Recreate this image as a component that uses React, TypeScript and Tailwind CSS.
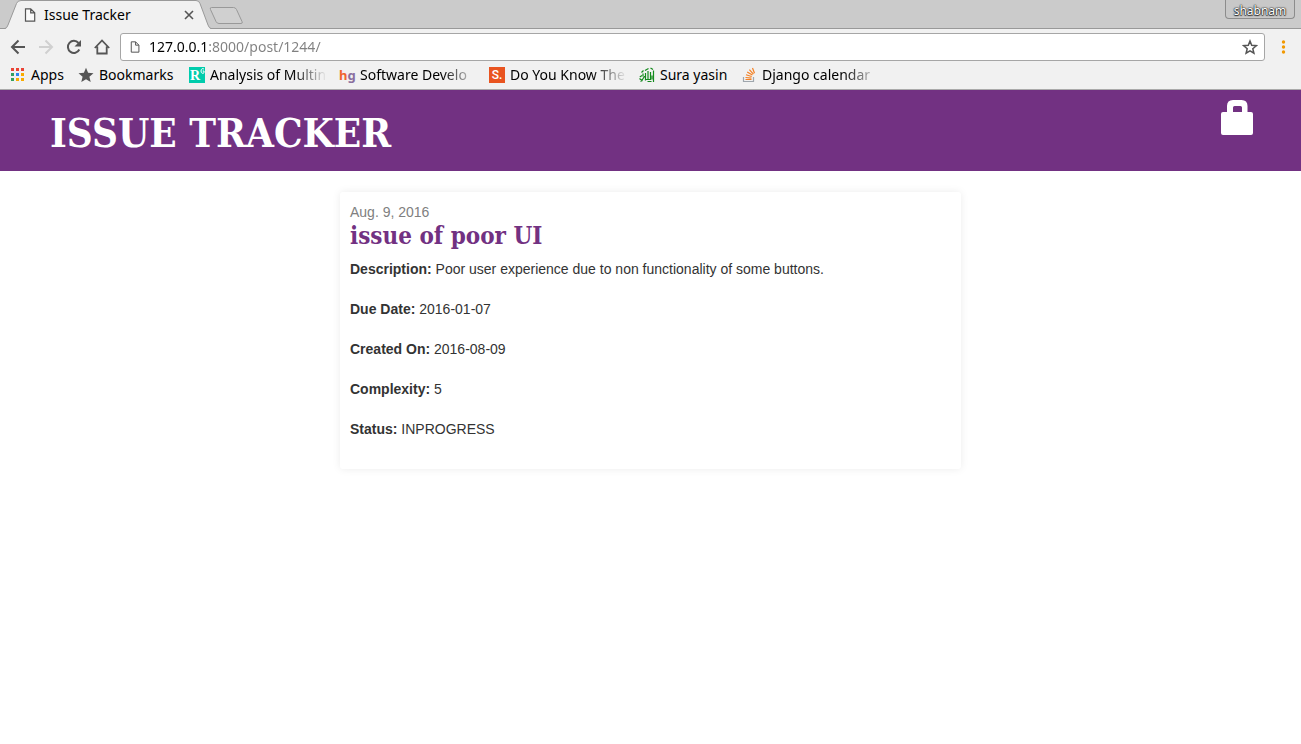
import type { ReactNode } from "react";

const details = [
  { label: "Description:", value: "Poor user experience due to non functionality of some buttons." },
  { label: "Due Date:", value: "2016-01-07" },
  { label: "Created On:", value: "2016-08-09" },
  { label: "Complexity:", value: "5" },
  { label: "Status:", value: "INPROGRESS" },
];

function PageIcon({ className }: { className: string }) {
  return (
    <svg viewBox="0 0 12 14" className={className} fill="#fafafa" stroke="#555" strokeWidth="1.2" aria-hidden="true">
      <path d="M1.5.8h5.2l4 4v8.400H1.500zM6.700.8v4h4" />
    </svg>
  );
}

function AppsIcon() {
  const colours = ["#ea4335", "#ea4335", "#ea4335", "#34a060", "#2f86f0", "#f9ab00", "#34a060", "#f9ab00", "#f9ab00"];
  return (
    <svg viewBox="0 0 16 16" className="size-4" aria-hidden="true">
      {colours.map((fill, i) => (
        <rect key={i} x={1 + (i % 3) * 5} y={1 + Math.floor(i / 3) * 5} width="3" height="3" fill={fill} />
      ))}
    </svg>
  );
}

function StarIcon() {
  return (
    <svg viewBox="0 0 16 16" className="size-4" fill="#555" aria-hidden="true">
      <path d="m8 .8 2.100 5 5.400.5-4.100 3.500 1.300 5.300L8 12.300l-4.700 2.800 1.300-5.300L.5 6.300l5.400-.5z" />
    </svg>
  );
}

function ResearchIcon() {
  return (
    <span aria-hidden="true" className="relative block size-4 bg-[#00ccac] pl-px font-['Liberation_Serif',serif] text-[14px] font-bold leading-[18px] text-white">
      R
      <svg viewBox="0 0 5 6" className="absolute right-0 top-px h-[6px] w-[5px]" fill="none" stroke="#fff">
        <path d="M4 1.200C3 0 1 .5 1 3s2 2.800 3 1.800V3H2.700" />
      </svg>
    </span>
  );
}

function HgIcon() {
  return (
    <span aria-hidden="true" className="flex size-4 font-['Noto_Sans',sans-serif] text-[13px] font-bold leading-4">
      <span className="text-[#f0652f]">h</span>
      <span className="text-[#8a6f9e]">g</span>
    </span>
  );
}

function SIcon() {
  return (
    <span aria-hidden="true" className="block size-4 bg-[#e95420] text-center font-['Roboto',sans-serif] text-[12px] font-medium leading-4 text-white">
      S.
    </span>
  );
}

function CalligraphyIcon() {
  return (
    <svg viewBox="0 0 16 16" className="size-4" fill="none" stroke="#128a1c" strokeWidth="1.2" aria-hidden="true">
      <path d="M14.500 3.500v11.500M11.500 5v7.500h-2.500M9 4v8.500H6.500M6.500 6v7.500M6.500 9.500C4.500 8.500 4 14 1.500 14.500M.8 10 3 8.500M.5 11.500 3.500 14M2.500 5.500l2-2M6 3.500 9.500 1.500M11.500 1l2.500 1.500M12.500 14.500H8.500M4 6.500v3M13 8.500v4" />
    </svg>
  );
}

function StackIcon() {
  return (
    <svg viewBox="0 0 16 16" className="size-4" fill="none" aria-hidden="true">
      <path d="M2.500 10v4.500h10V10" stroke="#9fa6ad" strokeWidth="1.2" />
      <path d="M4.500 12.500h6M4.500 10.500l6 .6M5 7.800l5.700 1.700M6.200 5l5.200 3M8.400 2.700l4 4.500M11.500 1l2 5.200" stroke="#f48024" strokeWidth="1.200" />
    </svg>
  );
}

const bookmarks: { name: string; icon: ReactNode; width: string; fade?: boolean }[] = [
  { name: "Apps", icon: <AppsIcon />, width: "w-14" },
  { name: "Bookmarks", icon: <StarIcon />, width: "w-[99px]" },
  { name: "Analysis of Multin", icon: <ResearchIcon />, width: "w-[138px]", fade: true },
  { name: "Software Develo", icon: <HgIcon />, width: "w-[138px]", fade: true },
  { name: "Do You Know The", icon: <SIcon />, width: "w-[138px]", fade: true },
  { name: "Sura yasin", icon: <CalligraphyIcon />, width: "w-[90px]" },
  { name: "Django calendar", icon: <StackIcon />, width: "w-[138px]", fade: true },
];

function TabStrip() {
  return (
    <div className="flex h-[29px] items-start border-b border-[#999] bg-[#cbcbcb] pl-[5px]">
      <div className="relative flex h-[29px] w-[206px] shrink-0 items-center pl-[19px] pr-[17px]">
        <svg viewBox="0 0 206 29" className="absolute inset-0 h-full w-full" aria-hidden="true">
          <path d="M0 29Q2 28 3 25L11.500 3.500Q12.500.5 16 .5H191Q194 .5 195 3.500L203 25Q204 28 206 29Z" fill="#f1f1f1" />
          <path d="M0 28.500Q2 28 3 25L11.500 3.500Q12.500.5 16 .5H191Q194 .5 195 3.500L203 25Q204 28 206 28.500" fill="none" stroke="#999" />
        </svg>
        <PageIcon className="relative h-[14px] w-3" />
        <span className="relative ml-2 flex-1 truncate text-[14px] leading-5">Issue Tracker</span>
        <button aria-label="Close tab" className="relative">
          <svg viewBox="0 0 10 10" className="size-[10px]" stroke="#555" strokeWidth="1.600" aria-hidden="true">
            <path d="m1 1 8 8M9 1 1 9" />
          </svg>
        </button>
      </div>
      <button aria-label="New tab" className="mt-[6px]">
        <svg viewBox="0 0 34 18" className="-ml-[2px] h-[18px] w-[34px]" fill="#d0d0d0" stroke="#999" aria-hidden="true">
          <path d="M2.500 1.500h22q2 0 3 2l5.500 12q1 2-1 2H10q-2 0-3-2L1.500 3.500q-1-2 1-2z" />
        </svg>
      </button>
      <button className="ml-auto mr-[6px] h-[19px] w-[70px] rounded-b-[4px] border border-t-0 border-[#8c8c8c] bg-[#c8c8c8] pt-1 text-[12px] leading-[14px] text-white [text-shadow:0_0_1px_#222,0_0_1px_#222,0_0_2px_#333,0_1px_1px_#333]">
        shabnam
      </button>
    </div>
  );
}

function Toolbar() {
  return (
    <div className="flex h-8 items-end px-[10px]">
      <div className="flex h-7 items-center gap-3">
        <button aria-label="Back">
          <svg viewBox="0 0 16 16" className="size-4" fill="none" stroke="#555" strokeWidth="2" aria-hidden="true">
            <path d="M15 8H2.500M8.500 1.500 2 8l6.500 6.500" />
          </svg>
        </button>
        <button aria-label="Forward">
          <svg viewBox="0 0 16 16" className="size-4" fill="none" stroke="#d0d0d0" strokeWidth="2" aria-hidden="true">
            <path d="M1 8h12.500M7.500 1.500 14 8l-6.500 6.500" />
          </svg>
        </button>
        <button aria-label="Reload">
          <svg viewBox="0 0 16 16" className="size-4" aria-hidden="true">
            <path d="M13.300 10.500A6 6 0 1 1 12.500 4" fill="none" stroke="#555" strokeWidth="2" />
            <path d="M15 1v6.500H8.500z" fill="#555" />
          </svg>
        </button>
        <button aria-label="Home">
          <svg viewBox="0 0 16 16" className="size-4" fill="none" stroke="#555" strokeWidth="1.800" aria-hidden="true">
            <path d="M.8 9 8 1.500 15.200 9M3.300 7.500v7h9.400v-7" />
          </svg>
        </button>
      </div>
      <div className="ml-[10px] flex h-7 flex-1 items-center rounded-[3px] border border-[#a6a6a6] bg-white pl-[9px] pr-[6px]">
        <PageIcon className="h-3 w-[10px]" />
        <input
          aria-label="Address"
          defaultValue="127.0.0.1:8000/post/1244/"
          className="ml-[9px] min-w-0 flex-1 bg-[linear-gradient(to_right,#000_58px,#808080_58px)] bg-clip-text text-[14px] leading-5 text-transparent outline-none"
        />
        <button aria-label="Bookmark this page">
          <svg viewBox="0 0 16 16" className="size-4" fill="none" stroke="#555" strokeWidth="1.500" aria-hidden="true">
            <path d="m8 2 1.700 4.300 4.600.4-3.500 3 1.100 4.500L8 11.800l-3.900 2.400 1.100-4.500-3.500-3 4.600-.4z" />
          </svg>
        </button>
      </div>
      <button aria-label="Menu" className="ml-[10px] h-7">
        <svg viewBox="0 0 16 16" className="size-4" fill="#f29900" aria-hidden="true">
          <circle cx="8.500" cy="3" r="1.700" />
          <circle cx="8.500" cy="8" r="1.700" />
          <circle cx="8.500" cy="13" r="1.700" />
        </svg>
      </button>
    </div>
  );
}

function BookmarkBar() {
  return (
    <nav aria-label="Bookmarks" className="flex h-[29px] items-center gap-3 overflow-hidden border-b border-[#aaa] pl-[10px]">
      {bookmarks.map((b) => (
        <a key={b.name} href="#" className={`flex shrink-0 items-center gap-[5px] ${b.width}`}>
          <span className="size-4 shrink-0">{b.icon}</span>
          <span
            className={`min-w-0 flex-1 whitespace-nowrap text-[14px] leading-5 ${
              b.fade ? "[mask-image:linear-gradient(to_right,#000_70%,transparent)]" : ""
            }`}
          >
            {b.name}
          </span>
        </a>
      ))}
    </nav>
  );
}

export default function App() {
  return (
    <div className="min-h-screen bg-white">
      <div className="bg-[#f1f1f1] font-['Noto_Sans',sans-serif] text-black">
        <TabStrip />
        <Toolbar />
        <BookmarkBar />
      </div>
      <header className="flex h-[81px] items-start justify-between bg-[#723182] pl-[50px] pr-12 pt-[10px]">
        <h1 className="pt-2 font-['DejaVu_Serif_Condensed','DejaVu_Serif',serif] text-[40px] font-bold leading-[50px] text-white">
          <a href="#">ISSUE TRACKER</a>
        </h1>
        <a href="#" aria-label="Log in">
          <svg viewBox="0 0 32 35" className="h-[35px] w-8" fill="#fff" aria-hidden="true">
            <path fillRule="evenodd" d="M6 12V6q0-6 6-6h8.500q6 0 6 6v6H30q2 0 2 2v19q0 2-2 2H2q-2 0-2-2V14q0-2 2-2zM12 12h9V7.500q0-1.500-1.500-1.500h-6Q12 6 12 7.500z" />
          </svg>
        </a>
      </header>
      <main className="px-4 pt-[21px]">
        <article className="mx-auto w-full max-w-[621px] rounded-[3px] p-[10px] font-['Liberation_Sans',sans-serif] text-[14px] leading-5 text-[#333] shadow-[0_0_8px_rgba(0,0,0,0.08)]">
          <time dateTime="2016-08-09" className="block text-[#808080]">
            Aug. 9, 2016
          </time>
          <h2 className="font-['DejaVu_Serif_Condensed','DejaVu_Serif',serif] text-[24px] font-bold leading-7 text-[#723182]">
            issue of poor UI
          </h2>
          <div className="flex flex-col gap-5 pb-5 pt-[9px]">
            {details.map((d) => (
              <p key={d.label}>
                <b>{d.label}</b> {d.value}
              </p>
            ))}
          </div>
        </article>
      </main>
    </div>
  );
}
